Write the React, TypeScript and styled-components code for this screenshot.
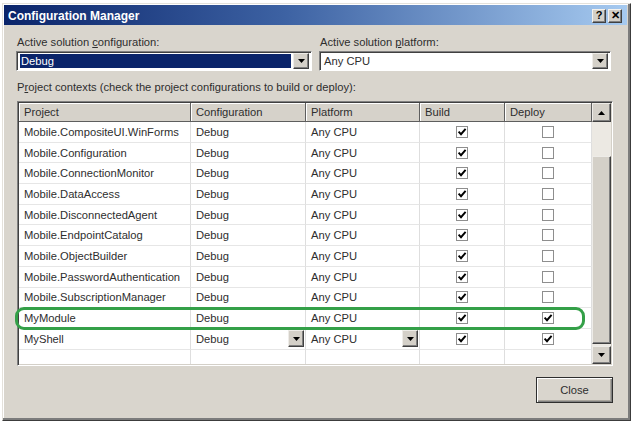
import React from "react";
import styled, { createGlobalStyle } from "styled-components";

const GlobalStyle = createGlobalStyle`
  html, body { margin: 0; padding: 0; background: #ffffff; }
  body {
    font-family: "Liberation Sans", Arial, sans-serif;
    font-size: 11.2px;
    color: #2e2e2e;
  }
  * { box-sizing: border-box; }
`;

const Window = styled.div`
  margin: 3px 0 0 2px;
  width: 629px;
  height: 418px;
  background: #d9d5cd;
  border: 1px solid;
  border-color: #e4e1db #3c3c3c #3c3c3c #e4e1db;
  box-shadow: inset -2px -2px #7c7c7c, inset 1px 1px #ffffff;
  padding: 1px 3px 3px 1px;
  display: flex;
  flex-direction: column;
`;

const TitleBar = styled.div`
  height: 20px;
  flex: none;
  background: linear-gradient(to right, #0a246a 0%, #3d62a3 45%, #a6caf0 100%);
  display: flex;
  align-items: center;
  padding: 1px 5px 0 4px;
  color: #ffffff;
  font-weight: bold;
  font-size: 12px;
`;

const TitleButtons = styled.div`
  margin-left: auto;
  display: flex;
  gap: 2px;
`;

const TitleButton = styled.div`
  width: 14px;
  height: 14px;
  background: #d4d0c8;
  border: 1px solid;
  border-color: #f4f2ee #404040 #404040 #f4f2ee;
  box-shadow: inset -1px -1px #808080;
  color: #000;
  font-size: 11px;
  font-weight: bold;
  display: flex;
  align-items: center;
  justify-content: center;
  line-height: 1;
`;

const Body = styled.div`
  flex: 1;
  display: flex;
  flex-direction: column;
  padding: 10px 14px 0 13px;
`;

const TopRow = styled.div`
  display: grid;
  grid-template-columns: 296px 292px;
  column-gap: 7px;
  margin-left: -1px;
`;

const Field = styled.div`
  display: flex;
  flex-direction: column;
`;

const Label = styled.div`
  height: 14px;
  line-height: 14px;
  padding-left: 1px;
  margin-bottom: 2px;
  white-space: nowrap;
`;

const Combo = styled.div`
  height: 20px;
  background: #ffffff;
  border: 1px solid;
  border-color: #808080 #ffffff #ffffff #808080;
  box-shadow: inset 1px 1px #404040;
  display: flex;
  align-items: center;
  padding: 2px 2px 2px 3px;
`;

const ComboText = styled.div<{ $selected?: boolean }>`
  flex: 1;
  height: 14px;
  line-height: 14px;
  padding-left: 1px;
  background: ${(p) => (p.$selected ? "#0a246a" : "transparent")};
  color: ${(p) => (p.$selected ? "#ffffff" : "#2e2e2e")};
  margin-right: 2px;
`;

const ArrowButton = styled.div<{ $w?: number; $h?: number }>`
  width: ${(p) => p.$w ?? 16}px;
  height: ${(p) => p.$h ?? 16}px;
  flex: none;
  background: #d4d0c8;
  border: 1px solid;
  border-color: #eeece8 #404040 #404040 #eeece8;
  box-shadow: inset -1px -1px #808080;
  display: flex;
  align-items: center;
  justify-content: center;
`;

const SectionLabel = styled.div`
  margin-top: 9px;
  height: 14px;
  line-height: 14px;
  white-space: nowrap;
`;

const GridBox = styled.div`
  position: relative;
  margin-top: 7px;
  height: 265px;
  display: flex;
  background: #ffffff;
  border: 1px solid;
  border-color: #808080 #ffffff #ffffff #808080;
  box-shadow: inset 1px 1px #404040, inset -1px -1px #d4d0c8;
  padding: 1px;
`;

const Table = styled.div`
  flex: 1;
  display: flex;
  flex-direction: column;
  min-width: 0;
`;

const COLS = "172px 115px 114px 85px 1fr";

const HeaderRow = styled.div`
  display: grid;
  grid-template-columns: ${COLS};
  height: 19px;
  flex: none;
`;

const HeaderCell = styled.div`
  background: #d6d2ca;
  border-right: 1px solid #5e5e5e;
  border-bottom: 1px solid #5e5e5e;
  box-shadow: inset 1px 1px #ffffff;
  padding-left: 5px;
  line-height: 18px;
  white-space: nowrap;
`;

const Row = styled.div<{ $fill?: boolean }>`
  display: grid;
  grid-template-columns: ${COLS};
  height: ${(p) => (p.$fill ? "auto" : "20.7px")};
  flex: ${(p) => (p.$fill ? 1 : "none")};
`;

const Cell = styled.div<{ $center?: boolean }>`
  border-right: 1px solid #dedede;
  border-bottom: 1px solid #e6e6e6;
  display: flex;
  align-items: center;
  justify-content: ${(p) => (p.$center ? "center" : "flex-start")};
  padding-left: ${(p) => (p.$center ? 0 : 5)}px;
  padding-right: 1px;
  white-space: nowrap;
  overflow: hidden;
`;

const FillCell = styled.div`
  border-right: 1px solid #dedede;
`;

const CellText = styled.span`
  flex: 1;
`;

const Check = styled.span`
  width: 12px;
  height: 12px;
  border: 1px solid #8e8e8e;
  background: #ffffff;
  display: flex;
  align-items: center;
  justify-content: center;
`;

const ScrollBar = styled.div`
  width: 19px;
  flex: none;
  display: flex;
  flex-direction: column;
  background: #ece9e3;
`;

const TrackGap = styled.div<{ $h: number }>`
  height: ${(p) => p.$h}px;
  flex: none;
`;

const Thumb = styled.div`
  flex: 1;
  background: #d4d0c8;
  border: 1px solid;
  border-color: #eeece8 #404040 #404040 #eeece8;
  box-shadow: inset -1px -1px #808080;
`;

const Highlight = styled.div`
  position: absolute;
  left: -3px;
  top: 205px;
  width: 570px;
  height: 23px;
  border: 3px solid #34a048;
  border-radius: 9px;
  pointer-events: none;
`;

const Footer = styled.div`
  display: flex;
  justify-content: flex-end;
  margin-top: 11px;
`;

const CloseButton = styled.div`
  width: 77px;
  height: 26px;
  background: #d9d5cd;
  border: 1px solid #2e2e2e;
  box-shadow: inset 1px 1px #ffffff, inset -1px -1px #808080, inset -2px -2px #a8a49c;
  display: flex;
  align-items: center;
  justify-content: center;
`;

const Tri = ({ up }: { up?: boolean }) => (
  <svg width="7" height="4" viewBox="0 0 7 4">
    <path d={up ? "M0 4 L7 4 L3.5 0 Z" : "M0 0 L7 0 L3.5 4 Z"} fill="#000" />
  </svg>
);

const Tick = () => (
  <svg width="10" height="10" viewBox="0 0 10 10">
    <path d="M1.6 4.6 L4 7.2 L8.6 1.8" stroke="#000" strokeWidth="1.9" fill="none" />
  </svg>
);

type Item = { name: string; deploy: boolean; drop?: boolean };

const rows: Item[] = [
  { name: "Mobile.CompositeUI.WinForms", deploy: false },
  { name: "Mobile.Configuration", deploy: false },
  { name: "Mobile.ConnectionMonitor", deploy: false },
  { name: "Mobile.DataAccess", deploy: false },
  { name: "Mobile.DisconnectedAgent", deploy: false },
  { name: "Mobile.EndpointCatalog", deploy: false },
  { name: "Mobile.ObjectBuilder", deploy: false },
  { name: "Mobile.PasswordAuthentication", deploy: false },
  { name: "Mobile.SubscriptionManager", deploy: false },
  { name: "MyModule", deploy: true },
  { name: "MyShell", deploy: true, drop: true },
];

export default function App() {
  return (
    <>
      <GlobalStyle />
      <Window>
        <TitleBar>
          Configuration Manager
          <TitleButtons>
            <TitleButton>?</TitleButton>
            <TitleButton>✕</TitleButton>
          </TitleButtons>
        </TitleBar>
        <Body>
          <TopRow>
            <Field>
              <Label>
                Active solution <u>c</u>onfiguration:
              </Label>
              <Combo>
                <ComboText $selected>Debug</ComboText>
                <ArrowButton>
                  <Tri />
                </ArrowButton>
              </Combo>
            </Field>
            <Field>
              <Label>
                Active solution <u>p</u>latform:
              </Label>
              <Combo>
                <ComboText>Any CPU</ComboText>
                <ArrowButton>
                  <Tri />
                </ArrowButton>
              </Combo>
            </Field>
          </TopRow>
          <SectionLabel>
            P<u>r</u>oject contexts (check the project configurations to build or deploy):
          </SectionLabel>
          <GridBox>
            <Table>
              <HeaderRow>
                <HeaderCell>Project</HeaderCell>
                <HeaderCell>Configuration</HeaderCell>
                <HeaderCell>Platform</HeaderCell>
                <HeaderCell>Build</HeaderCell>
                <HeaderCell>Deploy</HeaderCell>
              </HeaderRow>
              {rows.map((r) => (
                <Row key={r.name}>
                  <Cell>{r.name}</Cell>
                  <Cell>
                    <CellText>Debug</CellText>
                    {r.drop && (
                      <ArrowButton $w={16} $h={17}>
                        <Tri />
                      </ArrowButton>
                    )}
                  </Cell>
                  <Cell>
                    <CellText>Any CPU</CellText>
                    {r.drop && (
                      <ArrowButton $w={16} $h={17}>
                        <Tri />
                      </ArrowButton>
                    )}
                  </Cell>
                  <Cell $center>
                    <Check>
                      <Tick />
                    </Check>
                  </Cell>
                  <Cell $center>
                    <Check>{r.deploy && <Tick />}</Check>
                  </Cell>
                </Row>
              ))}
              <Row $fill>
                <FillCell />
                <FillCell />
                <FillCell />
                <FillCell />
                <FillCell />
              </Row>
            </Table>
            <ScrollBar>
              <ArrowButton $w={19} $h={19}>
                <Tri up />
              </ArrowButton>
              <TrackGap $h={34} />
              <Thumb />
              <TrackGap $h={2} />
              <ArrowButton $w={19} $h={18}>
                <Tri />
              </ArrowButton>
            </ScrollBar>
            <Highlight />
          </GridBox>
          <Footer>
            <CloseButton>Close</CloseButton>
          </Footer>
        </Body>
      </Window>
    </>
  );
}
